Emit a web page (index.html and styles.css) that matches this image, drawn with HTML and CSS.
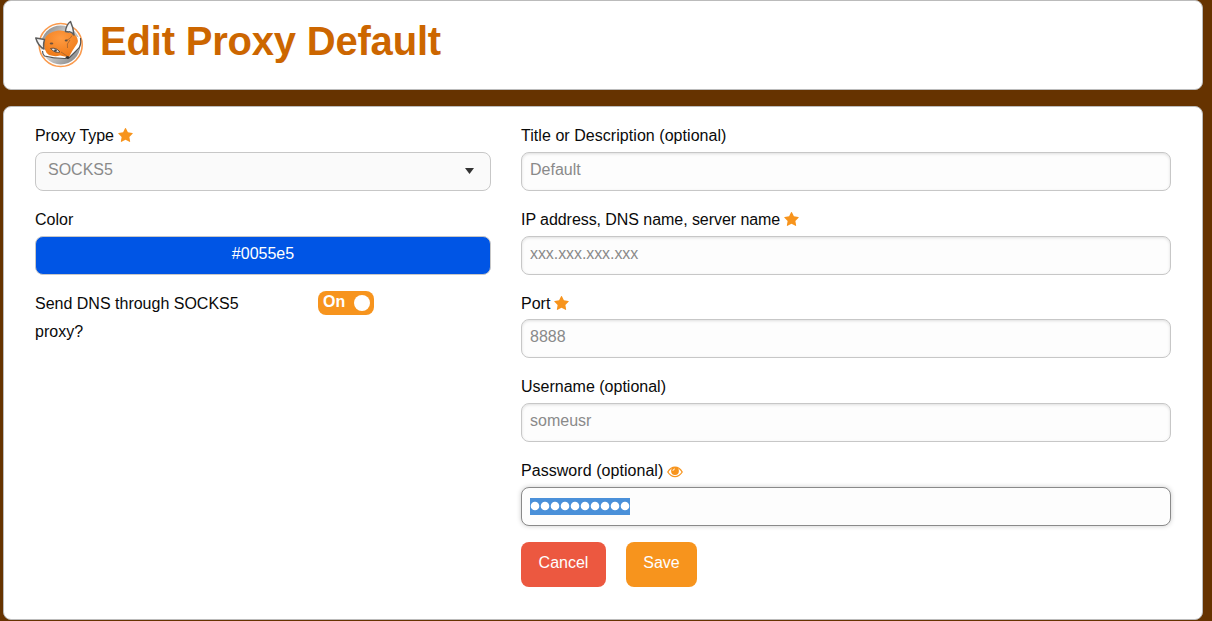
FILE: index.html
```
<!DOCTYPE html>
<html lang="en">
<head>
<meta charset="utf-8">
<title>Edit Proxy Default</title>
<link rel="stylesheet" href="styles.css">
</head>
<body>
<svg class="symbols" aria-hidden="true">
  <symbol id="star" viewBox="0 0 1664 1600"><path d="M1664 615q0 22-26 48l-363 354 86 500q1 7 1 20 0 21-10.500 35.500t-30.500 14.500q-19 0-40-12l-449-236-449 236q-22 12-40 12-21 0-31.500-14.500t-10.500-35.500q0-6 2-20l86-500-364-354q-25-27-25-48 0-37 56-46l502-73 225-455q19-41 49-41t49 41l225 455 502 73q56 9 56 46z"/></symbol>
</svg>
<header class="panel header">
  <svg class="logo" viewBox="0 0 50 48" aria-hidden="true">
    <defs>
      <linearGradient id="disc" x1="0" y1="0" x2="1" y2="1"><stop offset="0" stop-color="#777"/><stop offset=".45" stop-color="#d5d5d5"/><stop offset="1" stop-color="#777"/></linearGradient>
      <radialGradient id="fur" cx=".5" cy=".3" r=".7"><stop offset="0" stop-color="#ff9b42"/><stop offset="1" stop-color="#ee7a18"/></radialGradient>
    </defs>
    <circle cx="25.700" cy="25" r="21.500" fill="#fff" stroke="#fa9a4d" stroke-width="1.600"/>
    <circle cx="25.700" cy="25" r="19.600" fill="url(#disc)"/>
    <path d="M8 28 Q6 31 8 36 Q19 39.500 32 39 Q38 33 43 30 Q46 26 45.500 18 L40 16 L12 24Z" fill="#fff"/>
    <path d="M9 20 Q12 12 23 10.500 Q28 10 32 12 L39 14 Q44 18 42.500 23 Q37 31 34 37 Q30 36.500 25 35.500 Q20 37 14 35 Q8 31 9 20Z" fill="url(#fur)"/>
    <path d="M.8 18 L9.500 19.500 Q8 25 9 29 Q3 26 .8 18Z" fill="#f5f5f5" stroke="#5d5d5d" stroke-width="1.500" stroke-linejoin="round"/>
    <path d="M30.500 11.500 Q31 5 35.500 1.500 Q38.500 8 39 15 Q36 11 33.500 12Z" fill="#f5f5f5" stroke="#5d5d5d" stroke-width="1.500" stroke-linejoin="round"/>
    <path d="M7.500 31 Q7.500 34 9.500 36 Q19 38.700 31 38.500 M45.500 18 Q46.500 26 43 29 L34 38" fill="none" stroke="#555" stroke-width="1.200"/>
    <path d="M15.500 28.500 Q21 27 25 32 Q20 33.500 15.500 28.500Z" fill="#e8e8e8" stroke="#5b4536" stroke-width=".9"/>
    <circle cx="20.500" cy="30.500" r="1.300" fill="#444"/>
    <path d="M31 20.500 Q36 19 37 15.500 M35 20 Q31 24 32.500 28 M26 32 L32 36" fill="none" stroke="#a0622f" stroke-width=".8"/>
    <ellipse cx="31.200" cy="20.500" rx="1.500" ry="1" fill="#65503e"/>
    <ellipse cx="16.500" cy="23.500" rx="1.800" ry="1.100" fill="#70523e"/>
    <ellipse cx="32.500" cy="37.500" rx="1.900" ry="1.500" fill="#333"/>
  </svg>
  <h1 class="title">Edit Proxy Default</h1>
</header>
<main class="panel form">
  <section class="column">
    <div class="field">
      <div class="label"><span class="type-label">Proxy Type</span><svg class="star"><use href="#star"/></svg></div>
      <div class="input select"><span>SOCKS5</span><svg class="arrow" viewBox="0 0 10 6" preserveAspectRatio="none"><path d="M0 0h10L5 6z"/></svg></div>
    </div>
    <div class="field">
      <div class="label"><span>Color</span></div>
      <div class="input color">#0055e5</div>
    </div>
    <div class="dns">
      <div class="dns-label">Send DNS through SOCKS5 proxy?</div>
      <div class="toggle"><span>On</span><i class="knob"></i></div>
    </div>
  </section>
  <section class="column">
    <div class="field">
      <div class="label"><span class="title-label">Title or Description (optional)</span></div>
      <div class="input">Default</div>
    </div>
    <div class="field">
      <div class="label"><span class="address-label">IP address, DNS name, server name</span><svg class="star"><use href="#star"/></svg></div>
      <div class="input address">xxx.xxx.xxx.xxx</div>
    </div>
    <div class="field">
      <div class="label"><span>Port</span><svg class="star"><use href="#star"/></svg></div>
      <div class="input">8888</div>
    </div>
    <div class="field">
      <div class="label"><span>Username (optional)</span></div>
      <div class="input">someusr</div>
    </div>
    <div class="field">
      <div class="label"><span class="password-label">Password (optional)</span><svg class="eye" viewBox="0 0 16 12"><path d="M.8 6Q3.800 1.200 8 1.200T15.200 6Q12.200 10.700 8 10.700T.8 6Z" fill="none" stroke="#f7941d" stroke-width="1.300"/><circle cx="8" cy="5" r="3.900"/><path d="M5.900 5A2.100 2.100 0 0 1 8 2.900" fill="none" stroke="#fff" stroke-width=".8"/></svg></div>
      <div class="input focused"><svg class="selection" viewBox="0 0 100 17"><path d="M5 8h.01M15 8h.01M25 8h.01M35 8h.01M45 8h.01M55 8h.01M65 8h.01M75 8h.01M85 8h.01M95 8h.01"/></svg></div>
    </div>
    <div class="actions"><div class="button cancel">Cancel</div><div class="button save">Save</div></div>
  </section>
</main>
</body>
</html>
```
FILE: styles.css
```
* { box-sizing: border-box; }
body {
  margin: 0;
  height: 621px;
  overflow: hidden;
  padding: 0 9px 0 3px;
  background: #630;
  color: #0a0a0a;
  font: 16px/28.8px "Liberation Sans", Arial, sans-serif;
}
.symbols { display: none; }
.panel { background: #fff; border: 1px solid #bbb; border-radius: 8px; }
.header { display: flex; height: 90px; padding: 19px 31px; gap: 15px; }
.logo { width: 50px; height: 48px; }
.title { margin: -7px 0 0; color: #c60; font-size: 40px; line-height: 56px; letter-spacing: -.2px; white-space: nowrap; }
.form {
  display: grid;
  grid-template-columns: 456px 650px;
  gap: 30px;
  height: 514px;
  margin-top: 16px;
  padding: 16px 31px;
}
.field { margin-bottom: 16px; }
.label { display: flex; align-items: center; gap: 4px; height: 28.800px; padding-bottom: 1.900px; white-space: nowrap; }
.type-label { letter-spacing: -.1px; }
.title-label { letter-spacing: .05px; }
.address-label { letter-spacing: -.06px; }
.password-label { letter-spacing: .05px; }
.star { width: 15px; height: 14px; margin-top: -2px; fill: #f7941d; }
.eye { width: 16px; height: 12px; fill: #f7941d; }
.input {
  height: 39px;
  padding: 3px 8px;
  border: 1px solid #c7c7c7;
  border-radius: 8px;
  background: #fdfdfd;
  box-shadow: inset 0 1px 3px rgba(0, 0, 0, .12);
  color: #8a8a8a;
}
.address { letter-spacing: -.08px; }
.select {
  display: flex;
  justify-content: space-between;
  padding: 3px 16px 0 12px;
  background: #fafafa;
  box-shadow: none;
}
.arrow { width: 9px; height: 6px; margin-top: 12px; fill: #333; }
.color { background: #0055e5; color: #fff; text-align: center; box-shadow: none; }
.dns { display: grid; grid-template-columns: 283px 56px; }
.dns-label { width: 250px; line-height: 28px; margin-top: -1px; }
.toggle {
  display: flex;
  align-items: center;
  justify-content: space-between;
  height: 24px;
  padding: 0 4px 0 5px;
  border-radius: 8px;
  background: #f7941d;
  color: #fff;
  font-weight: bold;
}
.toggle span { margin-top: -1px; }
.knob { width: 16px; height: 16px; border-radius: 50%; background: #fff; }
.focused { padding: 10px 8px; border-color: #8a8a8a; box-shadow: 0 0 5px #cacaca; }
.selection {
  display: block;
  width: 100px;
  height: 17px;
  background: #4a90d9;
  stroke: #fff;
  stroke-width: 8.6px;
  stroke-linecap: round;
}
.actions { display: flex; gap: 20px; }
.button { height: 45px; padding-top: 7px; border-radius: 8px; color: #fefefe; text-align: center; }
.cancel { width: 85px; background: #ec5840; }
.save { width: 71px; background: #f7941d; }
```
